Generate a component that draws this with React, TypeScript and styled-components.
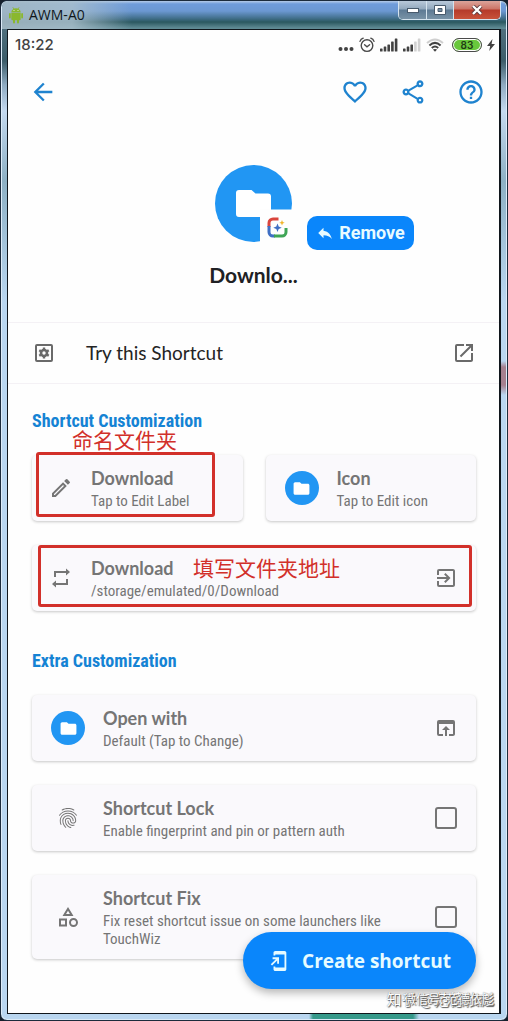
import React from 'react';
import styled, { createGlobalStyle, css } from 'styled-components';
import {
  MdAddToHomeScreen,
  MdArrowBack,
  MdExitToApp,
  MdFavoriteBorder,
  MdFingerprint,
  MdFolder,
  MdHelpOutline,
  MdOpenInBrowser,
  MdOpenInNew,
  MdOutlineCategory,
  MdOutlineModeEdit,
  MdOutlineShare,
  MdReply,
} from 'react-icons/md';

const blue = '#0a86fb';
const iconBlue = '#2196f3';
const barBlue = '#1f83cf';
const grey = '#757575';
const red = '#d2302a';
const display = "Lato, 'Open Sans', sans-serif";
const narrow = "'Roboto Condensed', 'Liberation Sans Narrow', Roboto, sans-serif";
const cjk = "'Noto Sans CJK SC', sans-serif";

const GlobalStyle = createGlobalStyle`
  *, *::before, *::after { box-sizing: border-box; }
  body { margin: 0; background: #16202c; font-family: ${display}; }
  button { border: 0; padding: 0; background: none; font: inherit; color: inherit; cursor: pointer; }
  h1, h2, p { margin: 0; }
  svg { display: block; flex: none; }
`;

const Frame = styled.div`
  min-height: 100vh;
  display: flex;
  flex-direction: column;
  padding: 0 6px 6px;
  border: 1px solid #1c2b3c;
  border-radius: 7px;
  box-shadow: inset 0 0 0 1px #dcebf8;
  background:
    linear-gradient(90deg, transparent 308px, #35998a 312px, #35998a 412px, transparent 418px) bottom / 100% 7px no-repeat,
    linear-gradient(180deg, transparent 360px, #a5808f 366px, #a5808f 384px, transparent 394px) right / 8px 100% no-repeat,
    linear-gradient(180deg, #5f7f8f 0, #3c5c69 60px, #8fabc2 84px, #c4d9ef 110px, #8db0c4 180px, #b9d6f0 300px, #b9d6f0 100%);
`;

const TitleBar = styled.header`
  display: flex;
  justify-content: space-between;
  align-items: flex-start;
  height: 28px;
  margin: 0 -5px;
  padding: 0 5px 0 6px;
  border-radius: 6px 6px 0 0;
  background:
    linear-gradient(90deg, #a3b8c4e6 0, #a9bfccd9 70px, transparent 130px),
    linear-gradient(180deg, #b5cbe8 0, #6f9cdb 3px, #6c98d2 10px, #43718f 17px, #2b5860 21px, #5f8a94 27px);
`;

const Title = styled.div`
  display: flex;
  align-items: center;
  gap: 5px;
  height: 27px;
  color: #10161c;
  font: 14px/20px 'Open Sans', sans-serif;
`;

const WindowButtons = styled.div`
  display: flex;
  height: 19px;
  border: 1px solid #d5e3ee;
  border-top: 0;
  border-radius: 0 0 5px 5px;
  overflow: hidden;
`;

const WindowButton = styled.button<{ $close?: boolean }>`
  display: grid;
  place-items: center;
  width: ${(p) => (p.$close ? 47 : 27)}px;
  background: ${(p) =>
    p.$close
      ? 'linear-gradient(#dba49a 0, #cc7466 8px, #b53a2a 9px, #c8523a 18px)'
      : 'linear-gradient(#b9c9da 0, #93a9be 8px, #5d7a94 9px, #7892a6 18px)'};
  & + & { border-left: 1px solid #d5e3ee; }
`;

const Screen = styled.main`
  position: relative;
  flex: 1;
  border: 1px solid #10161c;
  border-width: 1px 2px 1px 1px;
  background: #fefefe;
  color: #202124;
`;

const StatusBar = styled.div`
  display: flex;
  justify-content: space-between;
  align-items: center;
  height: 29px;
  padding: 0 4px 0 7px;
  color: #424242;
  font: 500 15px/20px Inter, sans-serif;
`;

const StatusIcons = styled.div`
  display: flex;
  align-items: center;
  gap: 5px;
`;

const Toolbar = styled.nav`
  display: flex;
  align-items: center;
  gap: 30px;
  height: 66px;
  padding: 0 14px 0 21px;
  color: ${barBlue};
`;

const ToolButton = styled.button<{ $first?: boolean }>`
  ${(p) => p.$first && css`margin-right: auto;`}
`;

const Hero = styled.section`
  display: grid;
  grid-template-columns: 1fr auto 1fr;
  column-gap: 15px;
  align-items: end;
  padding: 40px 0 34px;
`;

const Avatar = styled.div`
  grid-column: 2;
`;

const RemoveButton = styled.button`
  justify-self: start;
  display: flex;
  align-items: center;
  justify-content: center;
  gap: 5px;
  width: 107px;
  height: 34px;
  margin-bottom: -8px;
  border-radius: 10px;
  background: ${blue};
  color: #e8fbff;
  font: 700 18px/24px Roboto, sans-serif;
`;

const ShortcutName = styled.h1`
  grid-column: 1 / -1;
  margin-top: 20px;
  text-align: center;
  font: 700 21px/26px ${display};
`;

const TryRow = styled.button`
  display: flex;
  align-items: center;
  width: 100%;
  height: 62px;
  padding: 0 23px 0 24px;
  border-top: 1px solid #f4f1f5;
  border-bottom: 1px solid #f4f1f5;
  color: #6a6a6a;
`;

const TryLabel = styled.span`
  flex: 1;
  padding-left: 30px;
  text-align: left;
  color: #242424;
  font: 400 19px/24px ${display};
`;

const Section = styled.section`
  display: flex;
  flex-direction: column;
  gap: 24px;
  padding: 27px 23px 13px 24px;
`;

const Heading = styled.h2`
  color: #1583d4;
  font: 700 18px/20px ${narrow};
`;

const Pair = styled.div`
  display: grid;
  grid-template-columns: 1fr 1fr;
  gap: 23px;
`;

const cardLook = css<{ $compact?: boolean }>`
  display: flex;
  align-items: center;
  gap: 18px;
  width: 100%;
  padding: 11px 18px 11px ${(p) => (p.$compact ? 17 : 19)}px;
  border-radius: 5px;
  background: #faf9fc;
  box-shadow: 0 1px 3px #00000038;
  color: ${grey};
  text-align: left;
  cursor: pointer;
`;

const CardButton = styled.button<{ $compact?: boolean }>`${cardLook}`;
const CardLabel = styled.label<{ $compact?: boolean }>`${cardLook}`;

const Slot = styled.span<{ $width: number }>`
  display: grid;
  place-items: center;
  flex: none;
  width: ${(p) => p.$width}px;
`;

const Disc = styled.span`
  display: grid;
  place-items: center;
  width: 34px;
  height: 34px;
  border-radius: 50%;
  background: ${iconBlue};
  color: #fff;
`;

const CardText = styled.span`
  flex: 1;
  display: flex;
  flex-direction: column;
  gap: 2px;
  min-width: 0;
`;

const CardTitle = styled.span`
  font: 700 18px/24px ${display};
`;

const CardHint = styled.span`
  font: 400 15px/18px ${narrow};
`;

const Check = styled.input`
  appearance: none;
  width: 22px;
  height: 22px;
  margin: 0;
  border: 2px solid ${grey};
  border-radius: 3px;
  &:checked { background: ${iconBlue}; }
`;

const Marked = styled.div`
  position: relative;
  display: flex;
`;

const MarkBox = styled.span<{ $wide?: boolean }>`
  position: absolute;
  top: ${(p) => (p.$wide ? 0 : -3)}px;
  bottom: 4px;
  left: ${(p) => (p.$wide ? 6 : 4)}px;
  right: ${(p) => (p.$wide ? 4 : 28)}px;
  border: 3px solid ${red};
  border-radius: 3px;
  pointer-events: none;
`;

const MarkText = styled.span<{ $x: number; $y: number }>`
  position: absolute;
  left: ${(p) => p.$x}px;
  top: ${(p) => p.$y}px;
  color: ${red};
  font: 400 21px/22px ${cjk};
  white-space: nowrap;
  pointer-events: none;
`;

const CreateButton = styled.button`
  position: absolute;
  right: 23px;
  bottom: 24px;
  display: flex;
  align-items: center;
  justify-content: center;
  gap: 12px;
  width: 233px;
  height: 57px;
  border-radius: 29px;
  background: ${blue};
  box-shadow: 0 4px 8px #00000048;
  color: #e6fbff;
  font: 700 19px/24px 'Open Sans', sans-serif;
`;

const Watermark = styled.div<{ $size: number }>`
  position: absolute;
  right: 5px;
  bottom: 4px;
  color: #fff;
  font: 400 ${(p) => p.$size}px/20px ${cjk};
  text-shadow: 1px 1px 1px #555, 0 0 1px #777;
  white-space: nowrap;
  pointer-events: none;
`;

const Android = () => (
  <svg width="16" height="18" viewBox="0 0 16 18" fill="#8ab82e" aria-hidden="true">
    <path d="M3.3 6.4a4.7 4.2 0 0 1 9.4 0zM3.3 7h9.4v6.2a1 1 0 0 1-1 1H4.3a1 1 0 0 1-1-1z" />
    <path d="M4.8 1.2 6 3.2M11.2 1.2 10 3.2" stroke="#8ab82e" strokeWidth=".8" />
    <rect x="1" y="7" width="1.8" height="5.5" rx=".9" />
    <rect x="13.2" y="7" width="1.8" height="5.5" rx=".9" />
    <rect x="5" y="13" width="2" height="4.5" rx="1" />
    <rect x="9" y="13" width="2" height="4.5" rx="1" />
    <circle cx="6" cy="4.6" r=".5" fill="#fff" />
    <circle cx="10" cy="4.6" r=".5" fill="#fff" />
  </svg>
);

const Dots = () => (
  <svg width="16" height="14" viewBox="0 0 16 14" fill="#424242" aria-hidden="true">
    <circle cx="2.5" cy="11" r="2" /><circle cx="8" cy="11" r="2" /><circle cx="13.5" cy="11" r="2" />
  </svg>
);

const Alarm = () => (
  <svg width="16" height="16" viewBox="0 0 16 16" fill="none" stroke="#4a4a4a" strokeWidth="1.4" strokeLinecap="round" aria-hidden="true">
    <circle cx="8" cy="8.600" r="5.8" />
    <path d="M5.6 7.8 8 9.8l2.6-2M1 4.400Q1.8 2 4.2 1.200M15 4.400Q14.2 2 11.8 1.200" />
  </svg>
);

const Signal = ({ level }: { level: number }) => (
  <svg width="18" height="14" viewBox="0 0 18 14" aria-hidden="true">
    {[3, 5, 7, 10, 13].map((h, i) => (
      <rect key={h} x={i * 3.7} y={13.5 - h} width="2.6" height={h} rx=".6" fill={i < level ? '#424242' : '#d2d2d2'} />
    ))}
  </svg>
);

const Wifi = () => (
  <svg width="18" height="14" viewBox="0 0 18 14" fill="none" strokeWidth="2" aria-hidden="true">
    <path d="M1 5Q9-2 17 5" stroke="#cfcfcf" />
    <path d="M3.4 7.400Q9 2.400 14.6 7.400M5.8 10Q9 7 12.2 10" stroke="#424242" />
    <path d="M9 13.8 6.9 11.600Q9 10.200 11.1 11.600z" fill="#424242" />
  </svg>
);

const Battery = styled.span`
  display: grid;
  place-items: center;
  width: 30px;
  height: 14px;
  margin-left: 3px;
  border: 1px solid #4a4a4a;
  border-radius: 7px;
  background: #69c83c;
  box-shadow: inset 0 0 0 1px #fff;
  color: #1f3a14;
  font: 600 10px/12px Inter, sans-serif;
`;

const Bolt = () => (
  <svg width="8" height="12" viewBox="0 0 8 12" fill="#424242" aria-hidden="true">
    <path d="M5.5 0 0 7h3.2L2.2 12 8 5H4.600z" />
  </svg>
);

const GearBox = () => (
  <svg width="24" height="24" viewBox="0 0 24 24" aria-hidden="true">
    <rect x="4" y="4" width="16" height="16" rx="1" fill="none" stroke="currentColor" strokeWidth="2" />
    <circle cx="12" cy="12" r="3" fill="none" stroke="currentColor" strokeWidth="2.6" />
    <path
      d="M12 6.500v2.200M12 15.300v2.200M7.240 9.250l1.900 1.100M14.860 13.650l1.900 1.100M7.240 14.750l1.900-1.100M14.860 10.350l1.900-1.100"
      stroke="currentColor"
      strokeWidth="2.4"
    />
  </svg>
);

const Loop = () => (
  <svg width="24" height="24" viewBox="0 0 24 24" fill="none" stroke="currentColor" strokeWidth="2" aria-hidden="true">
    <path d="M6 11V6H18M18 13V18H6" />
    <path d="M17 2.500 21 6l-4 3.500zM7 14.500 3 18l4 3.500z" fill="currentColor" stroke="none" />
  </svg>
);

const FolderAvatar = () => (
  <svg width="77" height="77" viewBox="0 0 77 77" role="img" aria-label="Folder">
    <circle cx="38.5" cy="38.5" r="38.5" fill={iconBlue} />
    <path d="M24 25h12.500l4 3.500H53a3 3 0 0 1 3 3V49a3 3 0 0 1-3 3H24a3 3 0 0 1-3-3V28a3 3 0 0 1 3-3z" fill="#fff" />
    <path d="M45 44.500h32V77H45z" fill="#fefefe" />
    <g fill="none" strokeWidth="3">
      <path d="M54 62V58a4 4 0 0 1 4-4h5.500" stroke="#d9453d" />
      <path d="M54 61v6a4 4 0 0 0 4 4h2" stroke="#3f6fc4" />
      <path d="M59 71h8a4 4 0 0 0 4-4v-4" stroke="#3fa556" />
    </g>
    <path d="M62.500 58.500l1.200 3 3 1.200-3 1.200-1.200 3-1.200-3-3-1.200 3-1.200z" fill="#3f6fc4" />
    <path d="M67 55l.8 1.900 1.900.8-1.900.8-.8 1.900-.8-1.900-1.900-.8 1.900-.8z" fill="#f2b429" />
  </svg>
);

const FolderDisc = () => (
  <Disc><MdFolder size={19} /></Disc>
);

type TextProps = { title: string; hint: string };

const Texts = ({ title, hint }: TextProps) => (
  <CardText>
    <CardTitle>{title}</CardTitle>
    <CardHint>{hint}</CardHint>
  </CardText>
);

type ActionProps = TextProps & { icon: React.ReactNode; trailing?: React.ReactNode; compact?: boolean };

const ActionCard = ({ icon, trailing, compact, ...text }: ActionProps) => (
  <CardButton type="button" $compact={compact}>
    <Slot $width={compact ? 24 : 34}>{icon}</Slot>
    <Texts {...text} />
    {trailing && <Slot $width={24}>{trailing}</Slot>}
  </CardButton>
);

const CheckCard = ({ icon, ...text }: ActionProps) => (
  <CardLabel>
    <Slot $width={34}>{icon}</Slot>
    <Texts {...text} />
    <Slot $width={24}><Check type="checkbox" /></Slot>
  </CardLabel>
);

export default function App() {
  return (
    <>
      <GlobalStyle />
      <Frame>
        <TitleBar>
          <Title><Android />AWM-A0</Title>
          <WindowButtons>
            <WindowButton type="button" aria-label="Minimize">
              <svg width="12" height="5" viewBox="0 0 12 5" aria-hidden="true">
                <rect x=".5" y=".5" width="11" height="4" fill="#fff" stroke="#485a6c" />
              </svg>
            </WindowButton>
            <WindowButton type="button" aria-label="Maximize">
              <svg width="12" height="10" viewBox="0 0 12 10" fill="none" aria-hidden="true">
                <path d="M.5.5h11v9H.5z" fill="#fff" stroke="#485a6c" />
                <path d="M4 3.500h4v3H4z" fill="#7891a6" stroke="#485a6c" />
              </svg>
            </WindowButton>
            <WindowButton type="button" aria-label="Close" $close>
              <svg width="12" height="10" viewBox="0 0 12 10" aria-hidden="true">
                <path d="M2 1 10 9M10 1 2 9" stroke="#5c3a3c" strokeWidth="4" />
                <path d="M2 1 10 9M10 1 2 9" stroke="#fff" strokeWidth="2.4" />
              </svg>
            </WindowButton>
          </WindowButtons>
        </TitleBar>
        <Screen>
          <StatusBar>
            <span>18:22</span>
            <StatusIcons>
              <Dots />
              <Alarm />
              <Signal level={5} />
              <Signal level={3} />
              <Wifi />
              <Battery>83</Battery>
              <Bolt />
            </StatusIcons>
          </StatusBar>
          <Toolbar>
            <ToolButton type="button" aria-label="Back" $first><MdArrowBack size={28} /></ToolButton>
            <ToolButton type="button" aria-label="Favorite"><MdFavoriteBorder size={28} /></ToolButton>
            <ToolButton type="button" aria-label="Share"><MdOutlineShare size={28} /></ToolButton>
            <ToolButton type="button" aria-label="Help"><MdHelpOutline size={28} /></ToolButton>
          </Toolbar>
          <Hero>
            <Avatar><FolderAvatar /></Avatar>
            <RemoveButton type="button"><MdReply size={18} />Remove</RemoveButton>
            <ShortcutName>Downlo...</ShortcutName>
          </Hero>
          <TryRow type="button">
            <GearBox />
            <TryLabel>Try this Shortcut</TryLabel>
            <MdOpenInNew size={24} />
          </TryRow>
          <Section>
            <Heading>Shortcut Customization</Heading>
            <Pair>
              <Marked>
                <ActionCard compact icon={<MdOutlineModeEdit size={24} />} title="Download" hint="Tap to Edit Label" />
                <MarkBox />
                <MarkText $x={40} $y={-27}>命名文件夹</MarkText>
              </Marked>
              <ActionCard icon={<FolderDisc />} title="Icon" hint="Tap to Edit icon" />
            </Pair>
            <Marked>
              <ActionCard
                compact
                icon={<Loop />}
                title="Download"
                hint="/storage/emulated/0/Download"
                trailing={<MdExitToApp size={24} />}
              />
              <MarkBox $wide />
              <MarkText $x={161} $y={11}>填写文件夹地址</MarkText>
            </Marked>
          </Section>
          <Section>
            <Heading>Extra Customization</Heading>
            <ActionCard
              icon={<FolderDisc />}
              title="Open with"
              hint="Default (Tap to Change)"
              trailing={<MdOpenInBrowser size={24} />}
            />
            <CheckCard icon={<MdFingerprint size={24} />} title="Shortcut Lock" hint="Enable fingerprint and pin or pattern auth" />
            <CheckCard
              icon={<MdOutlineCategory size={24} />}
              title="Shortcut Fix"
              hint="Fix reset shortcut issue on some launchers like TouchWiz"
            />
          </Section>
          <CreateButton type="button"><MdAddToHomeScreen size={22} />Create shortcut</CreateButton>
          <Watermark $size={15}>知乎 @范德依彪</Watermark>
          <Watermark $size={12}>微信号: 范德依彪</Watermark>
        </Screen>
      </Frame>
    </>
  );
}
